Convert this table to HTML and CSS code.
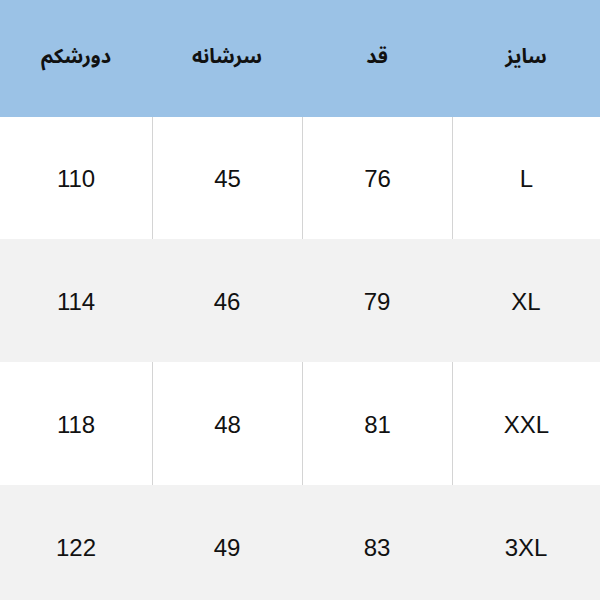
FILE: index.html
```html
<!DOCTYPE html>
<html lang="fa" dir="rtl">
<head>
<meta charset="utf-8">
<link rel="stylesheet" href="styles.css">
</head>
<body>
<div class="table">
  <div class="row head">
    <div class="cell">سایز</div>
    <div class="cell">قد</div>
    <div class="cell">سرشانه</div>
    <div class="cell">دورشکم</div>
  </div>
  <div class="row white r1">
    <div class="cell">L</div>
    <div class="cell">76</div>
    <div class="cell">45</div>
    <div class="cell">110</div>
  </div>
  <div class="row gray">
    <div class="cell">XL</div>
    <div class="cell">79</div>
    <div class="cell">46</div>
    <div class="cell">114</div>
  </div>
  <div class="row white">
    <div class="cell">XXL</div>
    <div class="cell">81</div>
    <div class="cell">48</div>
    <div class="cell">118</div>
  </div>
  <div class="row gray">
    <div class="cell">3XL</div>
    <div class="cell">83</div>
    <div class="cell">49</div>
    <div class="cell">122</div>
  </div>
</div>
</body>
</html>
```
FILE: styles.css
```css
html, body {
  margin: 0;
  padding: 0;
  background: #ffffff;
}
body {
  width: 600px;
  height: 600px;
  overflow: hidden;
  font-family: "Liberation Sans", "DejaVu Sans", sans-serif;
  color: #111111;
}
.table {
  display: flex;
  flex-direction: column;
}
.row {
  display: grid;
  grid-template-columns: 148px 150px 150px 152px;
  height: 123px;
}
.row.r1 {
  height: 122px;
}
.cell {
  display: flex;
  align-items: center;
  justify-content: center;
  font-size: 24px;
  padding-top: 2px;
}
.head {
  height: 117px;
  background: #9bc2e6;
}
.head .cell {
  font-family: "Noto Sans Arabic", "Noto Naskh Arabic", "DejaVu Sans", sans-serif;
  font-weight: bold;
  font-size: 20px;
  padding-top: 0;
  padding-bottom: 4px;
}
.white {
  background: #ffffff;
}
.white .cell {
  border-left: 1px solid #d4d4d4;
}
.white .cell:last-child {
  border-left: none;
}
.gray {
  background: #f2f2f2;
}
```
